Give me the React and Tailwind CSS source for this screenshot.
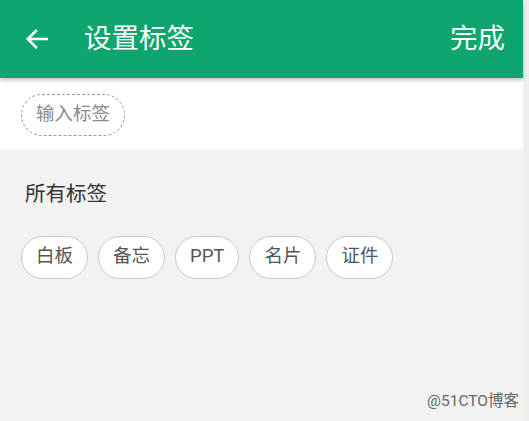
const tags = ['白板', '备忘', 'PPT', '名片', '证件'];

const font = { fontFamily: '"Roboto", "Noto Sans CJK SC", sans-serif' };

export default function App() {
  return (
    <div className="relative flex h-[421px] w-[529px] overflow-hidden bg-[#efefef]" style={font}>
      <div className="flex w-[523px] flex-col bg-[#f2f2f2]">
        {/* header */}
        <div className="relative z-10 flex h-[78px] items-center bg-[#0ea56e] pl-[24px] pr-[18px] shadow-[0_2px_4px_rgba(0,0,0,0.25)]">
          <svg width="26" height="26" viewBox="0 0 24 24" fill="none" stroke="white" strokeWidth="2.4" strokeLinecap="square">
            <path d="M21 12H4M11 4.5 3.5 12l7.5 7.5" />
          </svg>
          <span className="ml-[34px] text-[27.5px] leading-none text-white">设置标签</span>
          <span className="ml-auto text-[27.5px] leading-none text-white">完成</span>
        </div>

        {/* input */}
        <div className="flex h-[72px] items-center bg-white px-[21px]">
          <div className="mt-[1px] flex h-[42px] items-center rounded-full border-[1.5px] border-dashed border-[#9a9a9a] px-[14px] text-[18.5px] text-[#8a8a8a]">
            输入标签
          </div>
        </div>

        {/* all tags */}
        <div className="px-[25px] pt-[34px] text-[20.5px] leading-none text-[#333]">所有标签</div>
        <div className="flex gap-[10px] px-[21px] pt-[31px]">
          {tags.map((t) => (
            <div key={t} className="flex h-[43px] items-center rounded-full border-[1.5px] border-[#c8c8c8] bg-white px-[14px] text-[18.5px] text-[#555]">
              {t}
            </div>
          ))}
        </div>
      </div>

      <span className="absolute bottom-[8px] right-[10px] text-[15.5px] text-[#666]">@51CTO博客</span>
    </div>
  );
}
